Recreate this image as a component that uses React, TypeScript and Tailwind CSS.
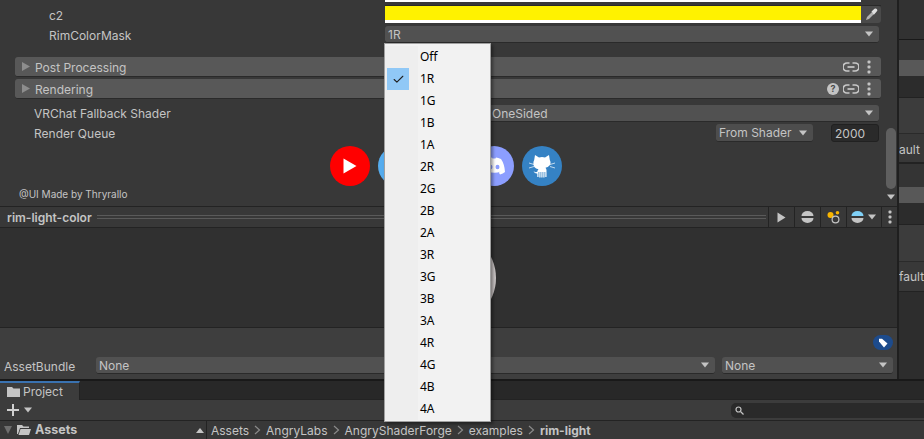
import React from 'react';
import { Check } from 'lucide-react';

const MASK_OPTIONS = ['Off', '1R', '1G', '1B', '1A', '2R', '2G', '2B', '2A', '3R', '3G', '3B', '3A', '4R', '4G', '4B', '4A'];

const Arrow = ({ className = '' }: { className?: string }) => (
  <svg width="10" height="6" viewBox="0 0 10 6" className={className}>
    <path d="M1 0.5h8L5 5.5z" fill="#c4c4c4" />
  </svg>
);

const Dots = () => (
  <svg width="4" height="14" viewBox="0 0 4 14">
    <rect x="0.5" y="0.5" width="3" height="3" rx="1" fill="#c4c4c4" />
    <rect x="0.5" y="5.5" width="3" height="3" rx="1" fill="#c4c4c4" />
    <rect x="0.5" y="10.5" width="3" height="3" rx="1" fill="#c4c4c4" />
  </svg>
);

const LinkIcon = () => (
  <svg width="16" height="10" viewBox="0 0 16 10" fill="none" stroke="#c8c8c8" strokeWidth="1.7">
    <path d="M6.5 1H4a4 4 0 0 0 0 8h2.5" />
    <path d="M9.5 1H12a4 4 0 0 1 0 8H9.5" />
    <path d="M4.5 5h7" />
  </svg>
);

const Dropdown = ({ label, className = '' }: { label: string; className?: string }) => (
  <div className={`flex items-center justify-between h-[17px] rounded-[3px] bg-[#515151] border-b border-[#2a2a2a] pl-[3px] pr-[5px] text-[#c4c4c4] ${className}`}>
    <span>{label}</span>
    <Arrow />
  </div>
);

const Foldout = ({ title, help, className = '' }: { title: string; help?: boolean; className?: string }) => (
  <div className={`flex items-center h-[20px] ml-[15px] rounded-[3px] bg-[#585858] border-b border-[#2a2a2a] pl-[7px] pr-[9px] ${className}`}>
    <svg width="8" height="9" viewBox="0 0 8 9">
      <path d="M0 0l8 4.5L0 9z" fill="#8d8d8d" />
    </svg>
    <span className="ml-[5px] pt-[1px] text-[#c4c4c4]">{title}</span>
    <div className="ml-auto flex items-center">
      {help && (
        <div className="flex items-center justify-center w-[12px] h-[12px] mr-[4px] rounded-full bg-[#c4c4c4] text-[#4a4a4a] text-[9px] font-bold">?</div>
      )}
      <LinkIcon />
      <div className="ml-[8px] mr-[1px] flex"><Dots /></div>
    </div>
  </div>
);

const SocialIcon = ({ color, children }: { color: string; children?: React.ReactNode }) => (
  <div className={`flex items-center justify-center w-[40px] h-[40px] rounded-full ${color}`}>{children}</div>
);

const ToolButton = ({ children, width }: { children: React.ReactNode; width: string }) => (
  <div className={`flex items-center justify-center h-full border-l border-[#232323] ${width}`}>{children}</div>
);

const SphereIcon = ({ top }: { top: string }) => (
  <svg width="13" height="12" viewBox="0 0 13 12">
    <path d="M0.5 5a6 5 0 0 1 12 0z" fill={top} />
    <path d="M0.5 7a6 5 0 0 0 12 0z" fill="#c4c4c4" />
  </svg>
);

const SidePanel = () => (
  <div className="flex flex-col w-[27px] overflow-hidden border-l-[2px] border-[#1f1f1f] text-[#c4c4c4] whitespace-nowrap">
    <div className="h-[40px] bg-[#323232] border-b border-[#191919]" />
    <div className="h-[20px] bg-[#353535]" />
    <div className="h-[16px] bg-[#585858]" />
    <div className="h-[22px] bg-[#2c2c2c] border-b border-[#222222]" />
    <div className="h-[36px] bg-[#3c3c3c] border-b border-[#2a2a2a]" />
    <div className="h-[30px] bg-[#383838] border-b-[2px] border-[#222222] pt-[7px]">ault</div>
    <div className="h-[23px] bg-[#343434]" />
    <div className="h-[16px] bg-[#585858]" />
    <div className="h-[22px] bg-[#2c2c2c] border-b border-[#222222]" />
    <div className="h-[37px] bg-[#3c3c3c] border-b border-[#2a2a2a]" />
    <div className="h-[30px] bg-[#383838] border-b border-[#222222] pt-[6px]">fault</div>
    <div className="flex-1 bg-[#2d2d2d]" />
  </div>
);

export default function App() {
  return (
    <div className="relative w-[924px] h-[439px] overflow-hidden bg-[#383838] text-[12px] leading-[17px] text-[#c4c4c4] font-['Inter','Liberation_Sans',sans-serif]">
      <div className="flex h-[379px]">
        <div className="flex flex-col w-[897px]">
          <div className="flex h-[206px]">
            <div className="w-[881px]">
              <div className="flex h-[23px]">
                <div className="w-[385px] pl-[49px] pt-[7px]">c2</div>
                <div className="flex-1 flex flex-col">
                  <div className="h-[2px] bg-white w-[476px]" />
                  <div className="flex mt-[3px] h-[18px] border-t border-[#2a2a2a]">
                    <div className="w-[476px] border-b-[3px] border-white bg-[#fff200]" />
                    <div className="flex flex-1 items-center justify-center rounded-r-[3px] bg-[#4a4a4a]">
                      <svg width="13" height="13" viewBox="0 0 13 13">
                        <path d="M1 12l1-3 5-5 2 2-5 5z" fill="#b0b0b0" />
                        <path d="M6.5 3.5L9.5 .8q1.5-.8 2.5.5t-.5 2.5l-2.6 3z" fill="#e0e0e0" />
                      </svg>
                    </div>
                  </div>
                </div>
              </div>
              <div className="flex h-[17px] mt-[3px]">
                <div className="w-[385px] pl-[49px] pt-[1px]">RimColorMask</div>
                <Dropdown label="1R" className="w-[494px]" />
              </div>
              <Foldout title="Post Processing" className="mt-[14px]" />
              <Foldout title="Rendering" help className="mt-[2px]" />
              <div className="flex h-[17px] mt-[6px]">
                <div className="w-[385px] pl-[34px]">VRChat Fallback Shader</div>
                <div className="flex items-center justify-between w-[494px] h-[17px] rounded-[3px] bg-[#515151] border-b border-[#2a2a2a] pl-[107px] pr-[5px]">
                  <span>OneSided</span>
                  <Arrow />
                </div>
              </div>
              <div className="flex items-center h-[18px] mt-[2px]">
                <div className="pl-[34px]">Render Queue</div>
                <div className="ml-auto flex items-center w-[97px] h-[18px] rounded-[3px] bg-[#4d4d4d] border-b border-[#2a2a2a] pl-[3px] pr-[5px] justify-between">
                  <span>From Shader</span>
                  <Arrow />
                </div>
                <div className="ml-[18px] mr-[2px] w-[48px] h-[18px] rounded-[3px] bg-[#2a2a2a] border border-[#212121] pl-[3px]">2000</div>
              </div>
              <div className="flex justify-center gap-[8px] mt-[4px] pl-[10px] h-[40px]">
                <SocialIcon color="bg-[#ff0000]">
                  <svg width="14" height="16" viewBox="0 0 14 16"><path d="M0.5 0.5L13.5 8 .5 15.5z" fill="#ffffff" /></svg>
                </SocialIcon>
                <SocialIcon color="bg-[#55acee]" />
                <SocialIcon color="bg-[#3a3a3a]" />
                <SocialIcon color="bg-[#8c9eff]">
                  <svg width="24" height="18" viewBox="0 0 24 18">
                    <path d="M5 2q3-1.500 5-1.500l.5 1h3l.5-1q2 0 5 1.500 3.500 5 4 13-2 1.500-5 2.500l-1.200-2q1.200-.4 2-1-6 2.500-13 0 .8.600 2 1L6 17.500q-3-1-5-2.500 .5-8 4-13z" fill="#ffffff" />
                    <ellipse cx="8.500" cy="10" rx="2" ry="2.300" fill="#8c9eff" />
                    <ellipse cx="15.500" cy="10" rx="2" ry="2.300" fill="#8c9eff" />
                  </svg>
                </SocialIcon>
                <SocialIcon color="bg-[#3582c4]">
                  <svg width="30" height="30" viewBox="0 0 30 30">
                    <path d="M8 4l4 2.500q3-.8 6 0L22 4l.8 5q1.700 3-.3 5.500-1.500 1.800-4 2.200 1 1 1 2.500V26h-1.200v-5h-.8v5.500h-1.200V21h-.8v5.500h-1.200V21h-.8v5.500h-1.200V21h-.8v5H10.300v-3.500q-2.500.5-3.800-2.500 1.500 1.800 3.800.8 0-1.500 1.200-2.600-2.700-.4-4.200-2.200Q5.500 12 7.200 9z" fill="#ffffff" />
                    <path d="M2 12l5 1.500M2 17l5-1.500M28 12l-5 1.500M28 17l-5-1.500" stroke="#ffffff" strokeWidth="0.7" />
                  </svg>
                </SocialIcon>
              </div>
              <div className="pl-[19px] text-[10px] leading-[16px]">@UI Made by Thryrallo</div>
            </div>
            <div className="flex flex-col w-[16px] pl-[5px] pt-[128px]">
              <div className="w-[10px] h-[61px] rounded-[5px] bg-[#5f5f5f]" />
              <Arrow className="mt-[5px]" />
            </div>
          </div>
          <div className="flex items-center h-[22px] bg-[#383838] border-y border-[#232323]">
            <span className="pl-[7px] pr-[5px] font-semibold">rim-light-color</span>
            <div className="flex-1 h-[4px] mr-[2px] border-y border-[#5a5a5a]" />
            <ToolButton width="w-[26px]">
              <svg width="9" height="11" viewBox="0 0 9 11"><path d="M0.5 0.5L8.500 5.500 .5 10.500z" fill="#c4c4c4" /></svg>
            </ToolButton>
            <ToolButton width="w-[26px]"><SphereIcon top="#c4c4c4" /></ToolButton>
            <ToolButton width="w-[26px]">
              <svg width="14" height="13" viewBox="0 0 14 13">
                <circle cx="3.500" cy="4" r="3" fill="#f9b500" />
                <circle cx="10.500" cy="1.800" r="1.800" fill="#f9b500" />
                <circle cx="8.500" cy="8.500" r="3.400" fill="none" stroke="#c4c4c4" strokeWidth="1.200" />
              </svg>
            </ToolButton>
            <ToolButton width="w-[35px]">
              <SphereIcon top="#7fd0f7" />
              <Arrow className="ml-[3px]" />
            </ToolButton>
            <ToolButton width="w-[16px]"><Dots /></ToolButton>
          </div>
          <div className="flex items-center justify-center h-[100px] bg-[#303030] border-b border-[#232323]">
            <div className="w-[94px] h-[94px] rounded-full bg-[#c9c4c4]" />
          </div>
          <div className="flex-1 bg-[#3e3e3e] pl-[4px]">
            <div className="flex justify-end h-[29px] items-center pr-[4px]">
              <div className="flex items-center justify-center w-[20px] h-[15px] rounded-full bg-[#1d4b8c]">
                <svg width="10" height="10" viewBox="0 0 10 10"><path d="M1 3.500V.8h3L9.500 5.500 6 9.500z" fill="#ffffff" /></svg>
              </div>
            </div>
            <div className="flex items-center h-[17px]">
              <div className="w-[92px] pt-[1px]">AssetBundle</div>
              <Dropdown label="None" className="w-[619px]" />
              <Dropdown label="None" className="ml-[7px] w-[171px]" />
            </div>
          </div>
        </div>
        <SidePanel />
      </div>
      <div className="h-[2px] bg-[#191919]" />
      <div className="flex h-[19px] bg-[#282828] border-b border-[#232323]">
        <div className="flex items-center w-[80px] h-[19px] bg-[#3c3c3c] border-t-[2px] border-[#3a72b0] border-r border-r-[#232323] pl-[7px]">
          <svg width="13" height="10" viewBox="0 0 13 10"><path d="M0 0h5l1.500 1.500H13V10H0z" fill="#c4c4c4" /></svg>
          <span className="ml-[3px]">Project</span>
        </div>
      </div>
      <div className="flex items-center h-[21px] bg-[#3c3c3c] border-b border-[#232323] pl-[7px]">
        <svg width="12" height="12" viewBox="0 0 12 12"><path d="M5 0h2v5h5v2H7v5H5V7H0V5h5z" fill="#d0d0d0" /></svg>
        <Arrow className="ml-[4px]" />
        <div className="ml-auto flex items-center w-[193px] h-[15px] rounded-l-[5px] bg-[#2a2a2a] pl-[4px]">
          <svg width="9" height="9" viewBox="0 0 9 9" fill="none" stroke="#c4c4c4" strokeWidth="1.200">
            <circle cx="3.500" cy="3.500" r="2.500" />
            <path d="M5.500 5.500L8.500 8.500" />
          </svg>
        </div>
      </div>
      <div className="flex items-center h-[18px] bg-[#383838]">
        <div className="flex items-center w-[193px] h-full pl-[4px] font-bold text-[12.5px] -mt-[1px]">
          <svg width="8" height="8" viewBox="0 0 8 8"><path d="M0 0h8L4 8z" fill="#6e6e6e" /></svg>
          <svg className="ml-[5px]" width="14" height="11" viewBox="0 0 14 11">
            <path d="M0 1h5l1.500 1.500H12V4H3L1 10H0z" fill="#c4c4c4" />
            <path d="M3.500 5H14l-2 6H1.500z" fill="#c4c4c4" />
          </svg>
          <span className="ml-[4px]">Assets</span>
        </div>
        <div className="flex justify-center w-[13px]">
          <svg width="8" height="5" viewBox="0 0 8 5"><path d="M0 5h8L4 0z" fill="#c4c4c4" /></svg>
        </div>
        <div className="flex items-center h-full border-l border-[#232323] pl-[4px] gap-[5px]">
          <span>Assets</span><Crumb />
          <span>AngryLabs</span><Crumb />
          <span>AngryShaderForge</span><Crumb />
          <span>examples</span><Crumb />
          <span className="font-bold">rim-light</span>
        </div>
      </div>
      <div className="absolute left-[384px] top-[43px] flex flex-col w-[107px] h-[379px] py-[2px] bg-[#f2f2f2] border border-[#a0a0a0] shadow-[2px_2px_3px_rgba(0,0,0,0.4)] text-[12px] leading-[22px] text-black font-['Noto_Sans','Open_Sans',sans-serif]">
        {MASK_OPTIONS.map(option => (
          <div key={option} className="flex h-[22px] shrink-0">
            <div className="w-[33px] h-[22px] pl-[2px] bg-[#eeeeee]">
              {option === '1R' && (
                <div className="flex items-center justify-center w-[22px] h-[22px] bg-[#90c8f6]">
                  <Check size={13} strokeWidth={2} color="#202020" />
                </div>
              )}
            </div>
            <span className="pl-[2px]">{option}</span>
          </div>
        ))}
      </div>
    </div>
  );
}

function Crumb() {
  return (
    <svg width="7" height="10" viewBox="0 0 7 10" fill="none" stroke="#8a8a8a" strokeWidth="1.200">
      <path d="M1 1l4.500 4L1 9" />
    </svg>
  );
}
